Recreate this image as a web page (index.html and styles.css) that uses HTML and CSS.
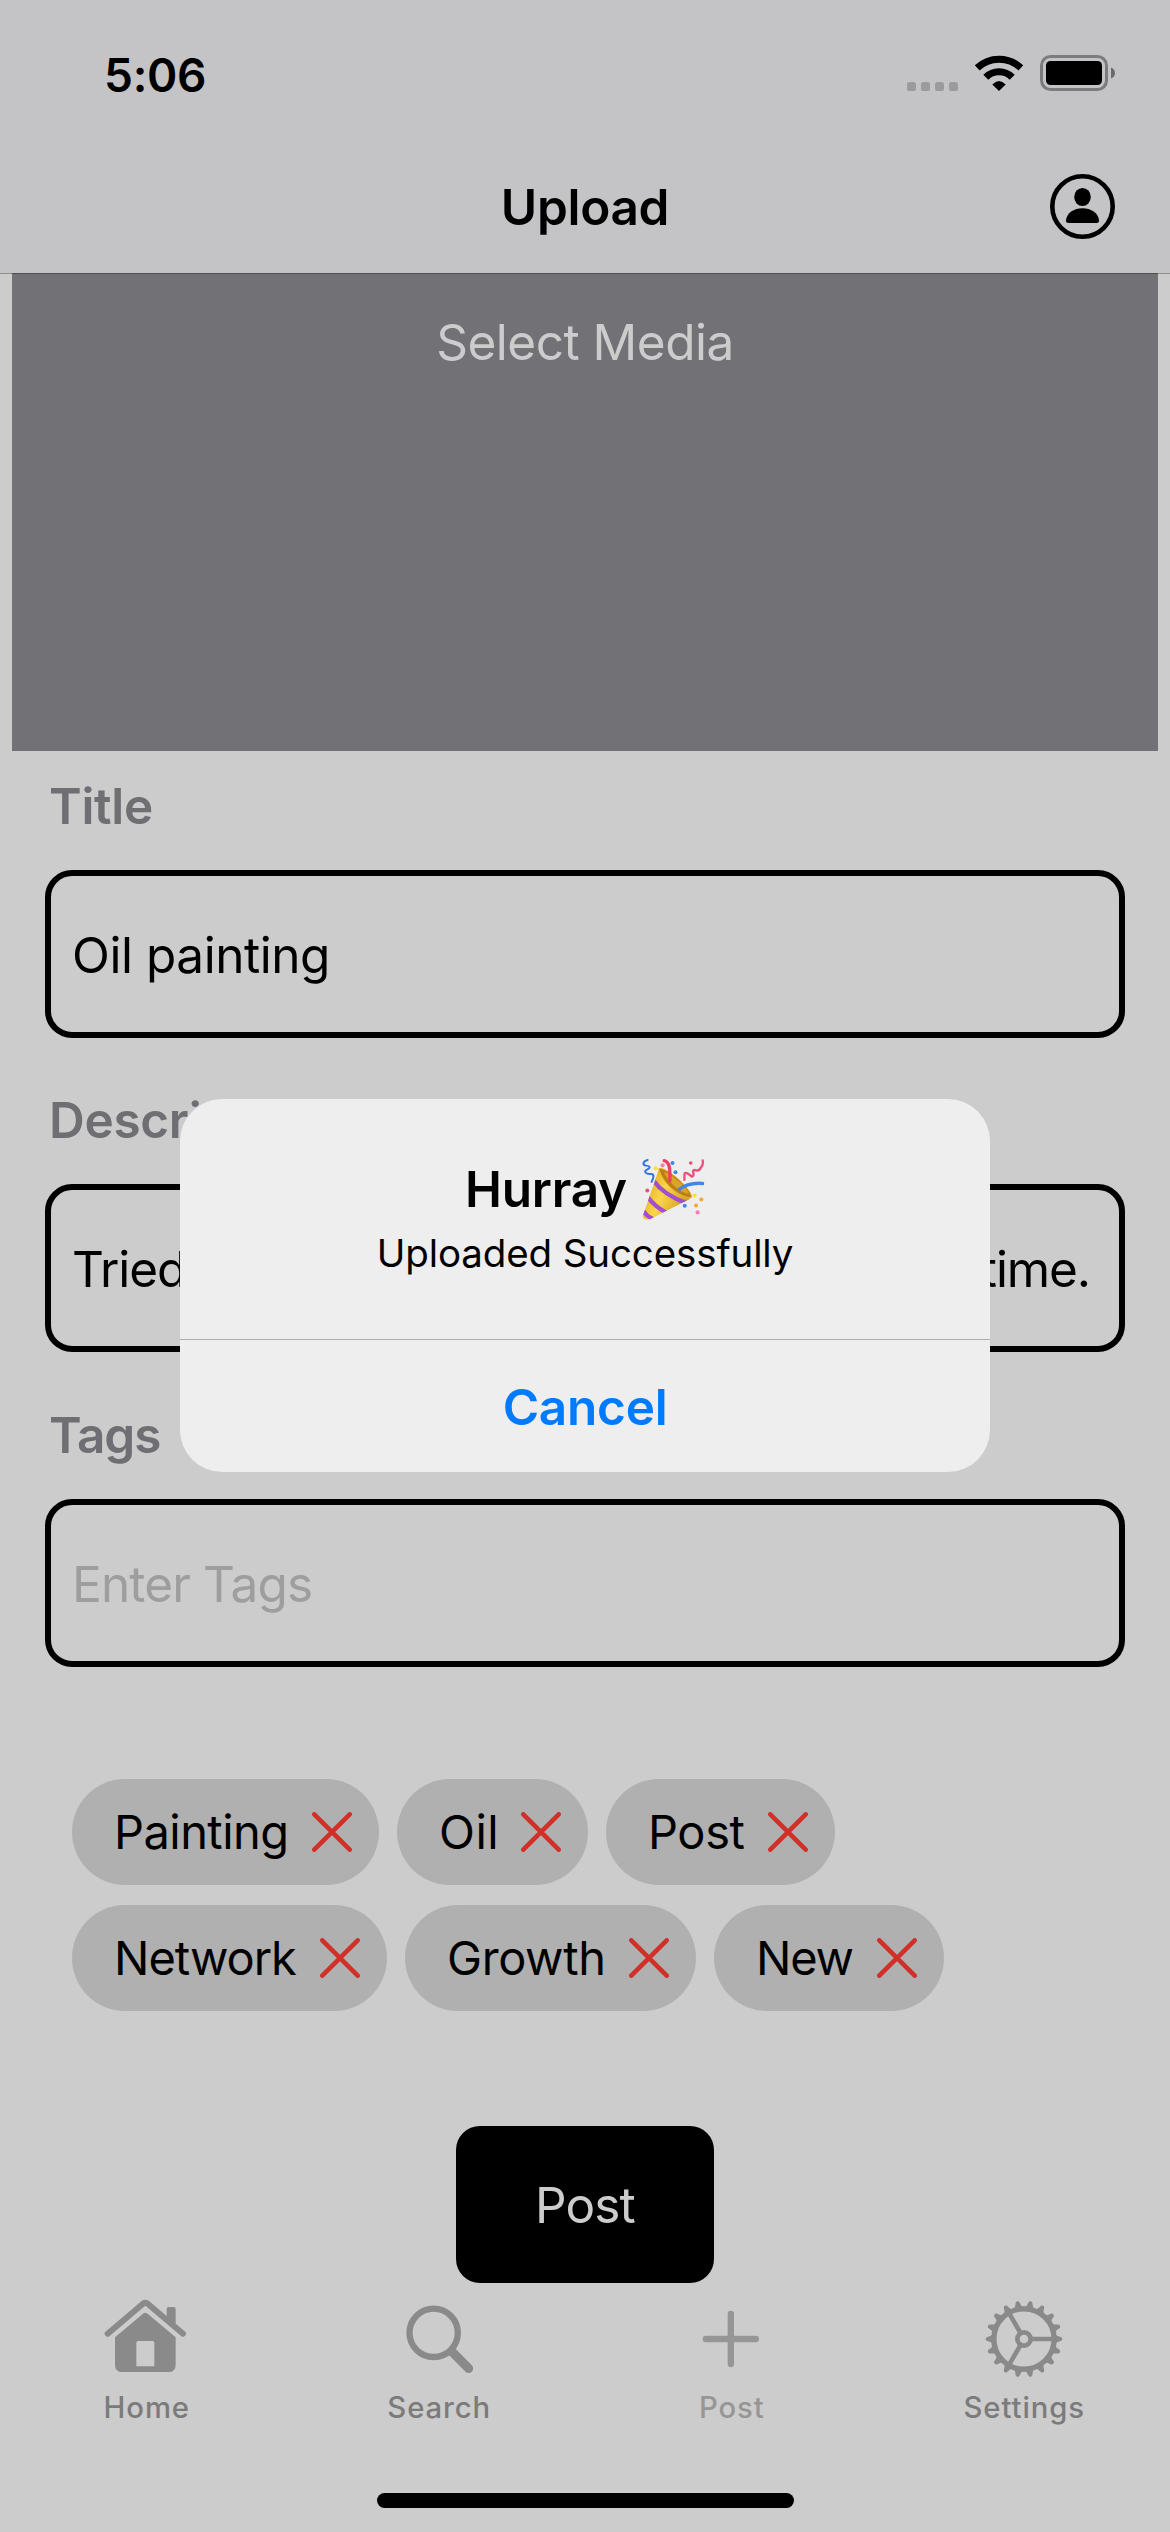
FILE: index.html
```html
<!DOCTYPE html>
<html lang="en">
<head>
<meta charset="utf-8">
<title>Upload</title>
<link rel="stylesheet" href="styles.css">
</head>
<body>
<div class="phone">
  <header class="header">
    <div class="status">
      <span class="status-time">5:06</span>
      <svg class="status-icons" viewBox="0 0 208 40" width="208" height="40">
        <g fill="#9b9b9d"><rect x="0" y="28" width="9" height="9" rx="2.6"/><rect x="14" y="28" width="9" height="9" rx="2.6"/><rect x="28" y="28" width="9" height="9" rx="2.6"/><rect x="42" y="28" width="9" height="9" rx="2.6"/></g>
        <g fill="none" stroke="#000" stroke-width="7">
          <path d="M70.200 13.900A31.500 31.500 0 0 1 113.800 13.900"/>
          <path d="M78.800 23.200A18.500 18.500 0 0 1 105.200 23.200"/>
        </g>
        <path fill="#000" d="M92 37L85.300 30.500Q92 23.300 98.700 30.500Z"/>
        <rect x="134.500" y="2.500" width="65" height="33" rx="9" fill="none" stroke="#7c7c7e" stroke-width="3"/>
        <rect x="139" y="7" width="56" height="24" rx="4.500"/>
        <path fill="#6b6b6d" d="M204 13.500Q208 15 208 19T204 24.500Z"/>
      </svg>
    </div>
    <div class="nav">
      <h1 class="nav-title">Upload</h1>
      <svg class="nav-profile" viewBox="0 0 65 65" width="65" height="65">
        <circle cx="32.500" cy="32.500" r="30.200" fill="none" stroke="#000" stroke-width="4.600"/>
        <ellipse cx="32.500" cy="23" rx="8.300" ry="9.100"/>
        <path d="M18.500 49Q16 49 16 46.500C16.500 39 24 34.300 32.500 34.300S48.500 39 49 46.500Q49 49 46.500 49Z"/>
      </svg>
    </div>
  </header>

  <main class="content">
    <div class="media">Select Media</div>
    <form class="form">
      <div class="group">
        <label class="label">Title</label>
        <div class="field">Oil painting</div>
      </div>
      <div class="group">
        <label class="label">Description</label>
        <div class="field field-filled">Tried oil painting for the very first time.</div>
      </div>
      <div class="group">
        <label class="label label-tags">Tags</label>
        <div class="field field-empty">Enter Tags</div>
      </div>
      <div class="tags">
        <div class="tag tag-painting"><span>Painting</span><svg class="x" viewBox="0 0 40 40"><path d="M2.300 2.300L37.700 37.700M37.700 2.300L2.300 37.700"/></svg></div>
        <div class="tag tag-oil"><span>Oil</span><svg class="x" viewBox="0 0 40 40"><path d="M2.300 2.300L37.700 37.700M37.700 2.300L2.300 37.700"/></svg></div>
        <div class="tag tag-post"><span>Post</span><svg class="x" viewBox="0 0 40 40"><path d="M2.300 2.300L37.700 37.700M37.700 2.300L2.300 37.700"/></svg></div>
        <div class="tag tag-network"><span>Network</span><svg class="x" viewBox="0 0 40 40"><path d="M2.300 2.300L37.700 37.700M37.700 2.300L2.300 37.700"/></svg></div>
        <div class="tag tag-growth"><span>Growth</span><svg class="x" viewBox="0 0 40 40"><path d="M2.300 2.300L37.700 37.700M37.700 2.300L2.300 37.700"/></svg></div>
        <div class="tag tag-new"><span>New</span><svg class="x" viewBox="0 0 40 40"><path d="M2.300 2.300L37.700 37.700M37.700 2.300L2.300 37.700"/></svg></div>
      </div>
      <div class="submit">Post</div>
    </form>
  </main>

  <nav class="tabs">
    <div class="tab">
      <svg viewBox="121 87 276 240" width="92" height="80">
        <path fill="none" stroke="#8a8a8a" stroke-width="18" stroke-linecap="round" stroke-linejoin="round" d="M144 191L250 101Q257 96 264 101L370 191"/>
        <path fill="#8a8a8a" d="M321 145V117Q321 111 327 111H342Q348 111 348 117V172Z"/>
        <path fill="#8a8a8a" fill-rule="evenodd" d="M166 202L250 131Q257 126 264 131L348 202V284Q348 306 326 306H188Q166 306 166 284ZM235 213Q230 213 230 218V289H284V218Q284 213 279 213Z"/>
      </svg>
      <span>Home</span>
    </div>
    <div class="tab">
      <svg viewBox="998 87 276 240" width="92" height="80" fill="none" stroke="#8a8a8a" stroke-linecap="round">
        <circle cx="1120" cy="188.500" r="72.500" stroke-width="19"/>
        <path stroke-width="27" d="M1176 246L1225 295.500"/>
      </svg>
      <span>Search</span>
    </div>
    <div class="tab tab-active">
      <svg viewBox="136 87 276 240" width="92" height="80" fill="none" stroke="#969696" stroke-width="19" stroke-linecap="round">
        <path d="M273.500 132V282M198.500 207H348.500"/>
      </svg>
      <span>Post</span>
    </div>
    <div class="tab">
      <svg viewBox="-138 -120 276 240" width="92" height="80" fill="none" stroke="#8a8a8a">
        <defs><path id="tooth" fill="#8a8a8a" stroke="none" d="M88 -16L95 -14L99 -10L112 -5.500Q115 -4 115 0T112 5.500L99 10L95 14L88 16Z"/></defs>
        <circle r="90.500" stroke-width="16"/>
        <g><use href="#tooth"/><use href="#tooth" transform="rotate(20)"/><use href="#tooth" transform="rotate(40)"/><use href="#tooth" transform="rotate(60)"/><use href="#tooth" transform="rotate(80)"/><use href="#tooth" transform="rotate(100)"/><use href="#tooth" transform="rotate(120)"/><use href="#tooth" transform="rotate(140)"/><use href="#tooth" transform="rotate(160)"/><use href="#tooth" transform="rotate(180)"/><use href="#tooth" transform="rotate(200)"/><use href="#tooth" transform="rotate(220)"/><use href="#tooth" transform="rotate(240)"/><use href="#tooth" transform="rotate(260)"/><use href="#tooth" transform="rotate(280)"/><use href="#tooth" transform="rotate(300)"/><use href="#tooth" transform="rotate(320)"/><use href="#tooth" transform="rotate(340)"/></g>
        <circle r="20" stroke-width="14"/>
        <path stroke-width="14" d="M22 0H88M-11 -19.100L-44 -76.200M-11 19.100L-44 76.200"/>
      </svg>
      <span>Settings</span>
    </div>
  </nav>
  <div class="home-indicator"></div>

  <div class="alert" role="alertdialog">
    <div class="alert-body">
      <div class="alert-title">
        <span>Hurray</span>
        <svg viewBox="0 0 190 190" width="63" height="63" role="img" aria-label="party popper">
          <defs>
            <linearGradient id="cone" x1="0" y1="0.300" x2="1" y2="0.800"><stop offset="0" stop-color="#e0a51c"/><stop offset=".4" stop-color="#fbd64a"/><stop offset="1" stop-color="#c98c12"/></linearGradient>
            <clipPath id="coneShape"><path d="M51 31Q86 60 150 118Q140 128 120 136L24 185Q4 190 2 176L42 60Z"/></clipPath>
          </defs>
          <path fill="url(#cone)" d="M51 31Q86 60 150 118Q140 128 120 136L24 185Q4 190 2 176L42 60Z"/>
          <g clip-path="url(#coneShape)" fill="none" stroke="#a14fd0" stroke-width="13">
            <path d="M34 68Q66 112 134 136"/><path d="M16 116Q38 146 72 164"/><path d="M2 156Q12 176 34 184"/>
          </g>
          <path fill="#b97f10" stroke="#e9b52e" stroke-width="3" d="M51 32C67 24 145 85 150 118C128 128 61 82 51 32Z"/>
          <path fill="#dca32a" d="M66 42C90 48 132 84 142 108C118 106 80 76 66 42Z"/>
          <g fill="none" stroke-linecap="round" stroke-linejoin="round">
            <path stroke="#ee3d64" stroke-width="10" d="M67 8C84 12 85 34 84 69"/>
            <path stroke="#3f86e6" stroke-width="10" stroke-linecap="butt" d="M110 96C130 80 158 74 187 77"/>
            <path stroke="#3474dc" stroke-width="6" d="M17 6C2 10 0 22 12 23S28 29 15 35S14 49 25 48S38 54 29 72"/>
            <path stroke="#ea4f7e" stroke-width="7" d="M128 66V50Q128 42 136 46T150 56Q158 56 154 42Q153 34 163 37T178 28Q186 20 183 7"/>
          </g>
          <g fill="#f283b1"><circle cx="62" cy="22" r="6.500"/><circle cx="168" cy="164" r="6.500"/></g>
          <g fill="#e8507c"><circle cx="147" cy="15" r="5.500"/><circle cx="16" cy="98" r="6"/></g>
          <g fill="#3f86e6"><circle cx="92" cy="15" r="6"/><circle cx="101" cy="43" r="6"/><circle cx="129" cy="144" r="6"/></g>
          <g fill="#f8e02e"><circle cx="41" cy="31" r="6"/><circle cx="159" cy="113" r="6"/></g>
          <g fill="#f6a33a"><circle cx="179" cy="125" r="6"/><circle cx="163" cy="143" r="6"/></g>
        </svg>
      </div>
      <div class="alert-message">Uploaded Successfully</div>
    </div>
    <div class="alert-action">Cancel</div>
  </div>
</div>
</body>
</html>
```
FILE: styles.css
```css
* { box-sizing: border-box; margin: 0; padding: 0; }

body {
  width: 1170px;
  background: #ccc;
  color: #000;
  font-family: Inter, "Liberation Sans", sans-serif;
  font-size: 49.5px;
  line-height: 60px;
}

svg { display: block; flex: none; }

.phone {
  position: relative;
  display: flex;
  flex-direction: column;
  width: 1170px;
  height: 2532px;
  overflow: hidden;
  background: #ccc;
}

.header {
  position: relative;
  z-index: 1;
  height: 274px;
  background: #c4c4c6;
  background-clip: padding-box;
  border-bottom: 1px solid rgba(0, 0, 0, 0.3);
}

.status {
  display: flex;
  justify-content: space-between;
  align-items: flex-start;
  height: 146px;
  padding: 45px 55px 0 104px;
}

.status-time {
  font-size: 46px;
  font-weight: 600;
  letter-spacing: -0.3px;
}

.status-icons { margin-top: 9px; }

.nav {
  display: grid;
  grid-template-columns: 1fr auto 1fr;
  align-items: center;
  height: 121px;
  padding: 0 55px;
}

.nav-title {
  grid-column: 2;
  font-size: 49.5px;
  font-weight: 600;
  letter-spacing: -0.3px;
}

.nav-profile { justify-self: end; }

.media {
  height: 478px;
  margin: -1px 12px 0;
  padding-top: 39px;
  background: #727176;
  color: #ccc;
  letter-spacing: -0.5px;
  text-align: center;
}

.form {
  display: flex;
  flex-direction: column;
  padding: 0 45px;
}

.group + .group { margin-top: 27px; }
.group:nth-child(3) { margin-top: 28px; }

.label {
  display: block;
  padding: 25px 4px 34px;
  color: #6f6e73;
  font-weight: 600;
  letter-spacing: -0.3px;
}

.label-tags { letter-spacing: -1.1px; }

.field {
  height: 168px;
  padding: 49px 29px 0 21px;
  border: 6px solid #000;
  border-radius: 27px;
  letter-spacing: -0.45px;
  white-space: nowrap;
}

.field-filled {
  letter-spacing: -1.1px;
  text-align-last: justify;
}

.field-empty {
  color: #9e9e9e;
  letter-spacing: -0.85px;
}

.tags {
  display: flex;
  flex-wrap: wrap;
  gap: 20px 18px;
  margin-top: 112px;
  padding: 0 27px;
}

.tag {
  display: flex;
  align-items: center;
  justify-content: space-between;
  height: 106px;
  padding: 0 27px 0 42px;
  border-radius: 53px;
  background: #b0b0b0;
  font-size: 47px;
  letter-spacing: -0.4px;
}

.tag-painting { width: 307px; letter-spacing: -0.55px; }
.tag-oil { width: 191px; letter-spacing: 0.5px; }
.tag-post { width: 229px; }
.tag-network { width: 315px; letter-spacing: -1px; }
.tag-growth { width: 291px; }
.tag-new { width: 230px; letter-spacing: -1.2px; }

.x {
  width: 40px;
  height: 40px;
  fill: none;
  stroke: #d13028;
  stroke-width: 4.5;
  stroke-linecap: round;
}

.submit {
  align-self: center;
  width: 258px;
  height: 157px;
  margin-top: 115px;
  padding-top: 49px;
  border-radius: 24px;
  background: #000;
  color: #ccc;
  letter-spacing: -0.9px;
  text-align: center;
}

.tabs {
  display: grid;
  grid-template-columns: repeat(4, 1fr);
  margin-top: 16px;
}

.tab {
  display: flex;
  flex-direction: column;
  align-items: center;
  color: #7b7b7b;
  font-size: 29.3px;
  font-weight: 500;
  letter-spacing: 0.9px;
  line-height: 36px;
}

.tab span { margin: 11px -1px 0 0; }
.tab-active { color: #969696; }

.home-indicator {
  align-self: center;
  width: 417px;
  height: 15px;
  margin-top: 67px;
  border-radius: 8px;
  background: #000;
}

.alert {
  position: absolute;
  z-index: 2;
  left: 180px;
  top: 1099px;
  width: 810px;
  height: 373px;
  border-radius: 42px;
  background: #eee;
  text-align: center;
}

.alert-body {
  height: 241px;
  padding-top: 59px;
  border-bottom: 1px solid #adadad;
}

.alert-title {
  display: flex;
  justify-content: center;
  gap: 15px;
  height: 63px;
  font-weight: 600;
  line-height: 62px;
  letter-spacing: -0.25px;
}

.alert-message {
  margin-top: 8px;
  font-size: 38.5px;
  line-height: 48px;
  letter-spacing: -0.12px;
}

.alert-action {
  padding-top: 37px;
  color: #007aff;
  font-weight: 600;
  letter-spacing: -0.25px;
}
```
